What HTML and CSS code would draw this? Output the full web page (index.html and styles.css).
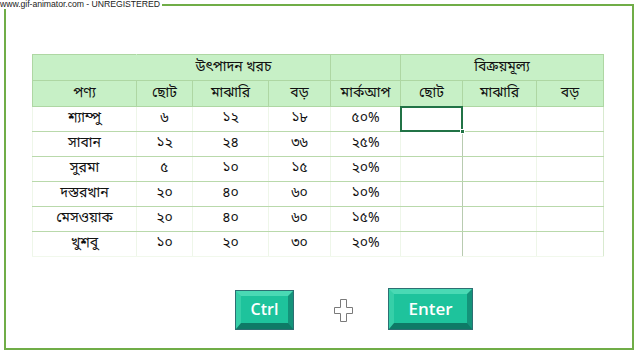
FILE: index.html
```html
<!DOCTYPE html>
<html lang="bn">
<head>
<meta charset="utf-8">
<link rel="stylesheet" href="styles.css">
</head>
<body>
<div class="watermark">www.gif-animator.com - UNREGISTERED</div>
<div class="frame">
  <table class="sheet">
    <colgroup>
      <col style="width:104px"><col style="width:56px"><col style="width:76px"><col style="width:62px">
      <col style="width:70px"><col style="width:62px"><col style="width:74px"><col style="width:67px">
    </colgroup>
    <thead>
      <tr class="head">
        <td class="blank"></td>
        <td colspan="3">উৎপাদন খরচ</td>
        <td></td>
        <td colspan="3">বিক্রয়মূল্য</td>
      </tr>
      <tr class="head">
        <td>পণ্য</td><td>ছোট</td><td>মাঝারি</td><td>বড়</td>
        <td>মার্কআপ</td><td>ছোট</td><td>মাঝারি</td><td>বড়</td>
      </tr>
    </thead>
    <tbody>
      <tr><td>শ্যাম্পু</td><td>৬</td><td>১২</td><td>১৮</td><td class="mk">৫০%</td><td class="sel"><span class="cursor"><span class="handle"></span></span></td><td class="mid"></td><td class="last"></td></tr>
      <tr><td>সাবান</td><td>১২</td><td>২৪</td><td>৩৬</td><td class="mk">২৫%</td><td class="sel2"></td><td class="mid"></td><td class="last"></td></tr>
      <tr><td>সুরমা</td><td>৫</td><td>১০</td><td>১৫</td><td class="mk">২০%</td><td class="sel2"></td><td class="mid"></td><td class="last"></td></tr>
      <tr><td>দস্তরখান</td><td>২০</td><td>৪০</td><td>৬০</td><td class="mk">১০%</td><td class="sel2"></td><td class="mid"></td><td class="last"></td></tr>
      <tr><td>মেসওয়াক</td><td>২০</td><td>৪০</td><td>৬০</td><td class="mk">১৫%</td><td class="sel2"></td><td class="mid"></td><td class="last"></td></tr>
      <tr><td>খুশবু</td><td>১০</td><td>২০</td><td>৩০</td><td class="mk">২০%</td><td class="sel2"></td><td class="mid"></td><td class="last"></td></tr>
    </tbody>
  </table>
  <div class="keys">
    <div class="key ctrl">Ctrl</div>
    <svg class="plus" width="19" height="23" viewBox="0 0 19 23">
      <polygon points="6.5,0.5 12.5,0.5 12.5,8.5 18.5,8.5 18.5,14.5 12.5,14.5 12.5,22.5 6.5,22.5 6.5,14.5 0.5,14.5 0.5,8.5 6.5,8.5" fill="#fff" stroke="#7a7a7a" stroke-width="1"/>
    </svg>
    <div class="key enter">Enter</div>
  </div>
</div>
</body>
</html>
```
FILE: styles.css
```css
html, body {
  margin: 0;
  padding: 0;
  background: #fff;
}
body {
  position: relative;
  width: 640px;
  height: 355px;
  overflow: hidden;
  font-family: "Noto Sans Bengali", "Lohit Bengali", "Noto Sans", "Liberation Sans", sans-serif;
}
.watermark {
  position: absolute;
  top: 0;
  left: 0;
  background: #fff;
  color: #222;
  font-family: "Liberation Sans", sans-serif;
  font-size: 8.7px;
  line-height: 9px;
  padding-right: 2px;
  letter-spacing: -0.05px;
}
.frame {
  box-sizing: border-box;
  margin: 4px 0 0 4px;
  width: 630px;
  height: 346px;
  border: 2px solid #70ad47;
  padding: 48px 0 0 26px;
}
.sheet {
  border-collapse: collapse;
  table-layout: fixed;
  width: 571px;
  font-size: 14px;
  color: #111;
}
.sheet td {
  text-align: center;
  vertical-align: middle;
  padding: 0;
  height: 24px;
  line-height: 16px;
  border-top: 1px solid #b9d9ab;
  border-bottom: 1px solid #b9d9ab;
  border-left: 1px solid #eef6e9;
  border-right: 1px solid #eef6e9;
  white-space: nowrap;
}
.sheet .head td {
  height: 25px;
  background: #c7f0c6;
  border: 1px solid #aed7a3;
}
.sheet .head td.blank {
  border-right-color: #c7f0c6;
}
.sheet td.mk {
  border-left-color: #c6dcbb;
}
.sheet td.sel, .sheet td.sel2 {
  border-left-color: #b8cbb0;
  border-right-color: #b8cbb0;
}
.sheet td.last {
  border-right-color: #d9ead0;
}
.sheet tbody tr:last-child td {
  border-bottom-color: #f1f8ec;
}
.sheet td.sel {
  position: relative;
}
.cursor {
  position: absolute;
  left: -1px;
  top: -1px;
  right: -1px;
  bottom: -1px;
  border: 2px solid #217346;
}
.handle {
  position: absolute;
  right: -4px;
  bottom: -4px;
  width: 5px;
  height: 5px;
  background: #217346;
  border: 1px solid #fff;
  box-sizing: border-box;
}
.keys {
  display: flex;
  align-items: center;
  margin: 30px 0 0 204px;
  height: 43px;
}
.key {
  box-sizing: border-box;
  display: flex;
  align-items: center;
  justify-content: center;
  color: #fff;
  font-family: "Open Sans", "Liberation Sans", sans-serif;
  font-weight: 600;
  font-size: 16px;
  background: #1ec39c;
  border-style: solid;
  border-width: 5px 5px 6px 5px;
  border-top-color: #4ad9b4;
  border-left-color: #36cfa8;
  border-right-color: #14937a;
  border-bottom-color: #0e7a66;
  box-shadow: 0 0 0 1px #2d6f72;
}
.ctrl {
  width: 57px;
  height: 38px;
  margin-top: 2px;
}
.plus {
  margin-left: 41px;
  margin-top: 4px;
}
.enter {
  width: 83px;
  height: 40px;
  margin-left: 36px;
  font-size: 17px;
}
```
